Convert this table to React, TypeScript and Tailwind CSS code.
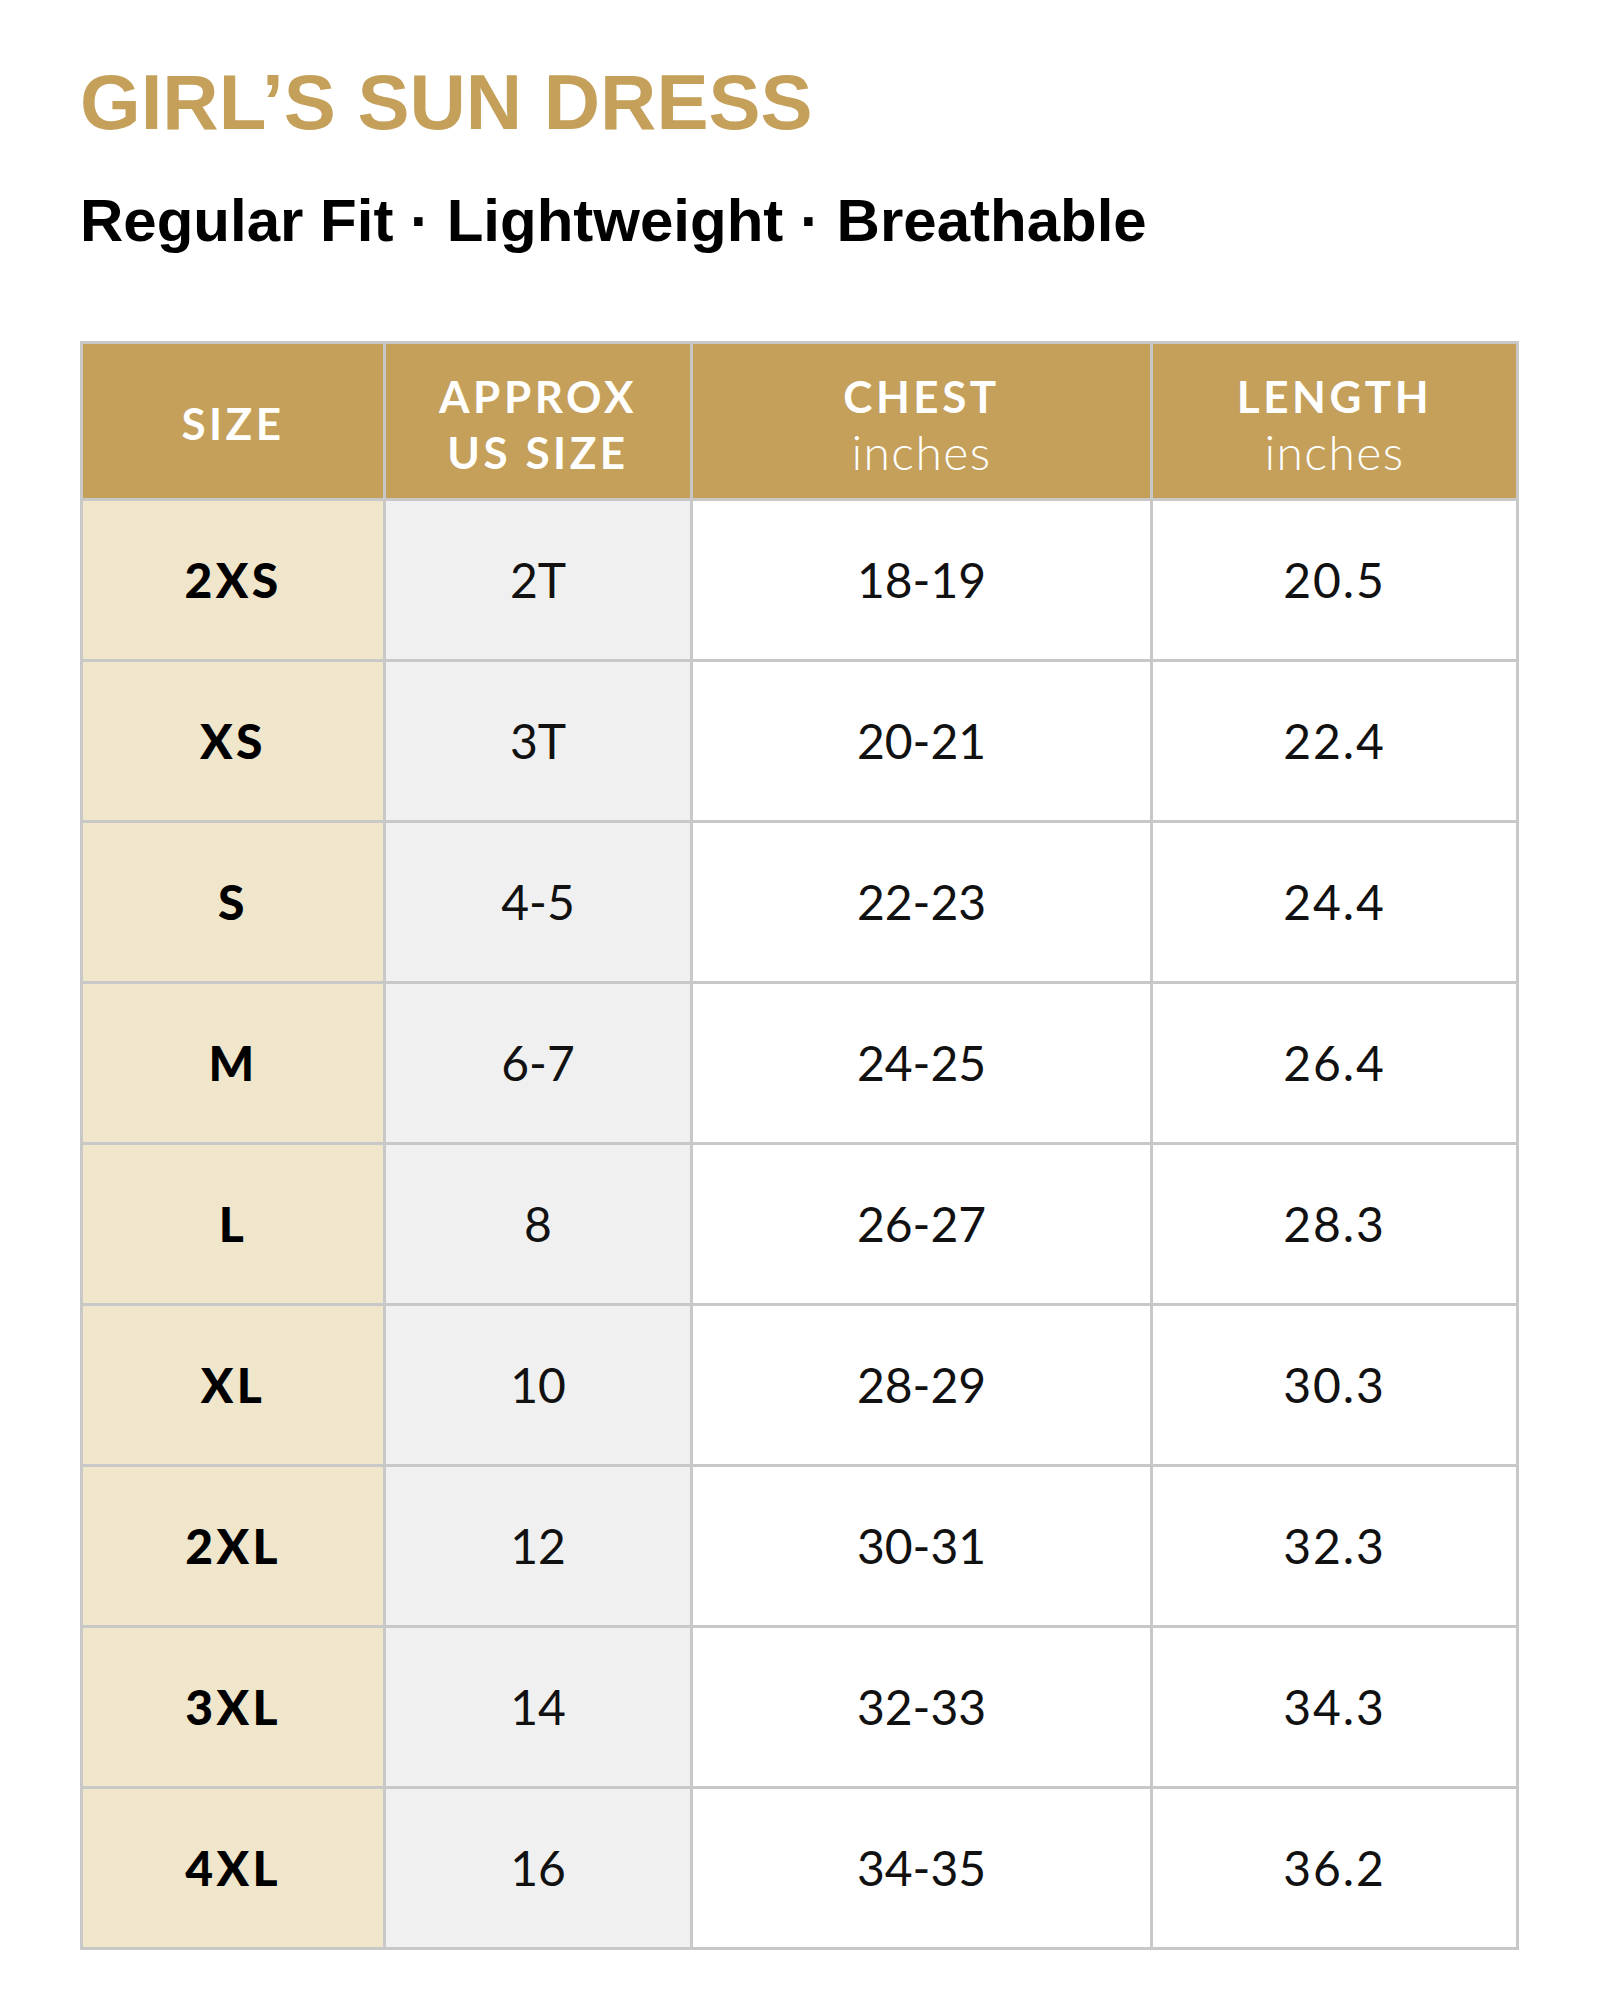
const ROWS: Array<[string, string, string, string]> = [
  ["2XS", "2T", "18-19", "20.5"],
  ["XS", "3T", "20-21", "22.4"],
  ["S", "4-5", "22-23", "24.4"],
  ["M", "6-7", "24-25", "26.4"],
  ["L", "8", "26-27", "28.3"],
  ["XL", "10", "28-29", "30.3"],
  ["2XL", "12", "30-31", "32.3"],
  ["3XL", "14", "32-33", "34.3"],
  ["4XL", "16", "34-35", "36.2"],
];

const cell = "flex items-center justify-center text-center";

export default function App() {
  return (
    <div className="min-h-[2000px] bg-white pl-[80px] pt-[63px]">
      <h1 className="font-['Liberation_Sans',Arial,sans-serif] text-[78px] font-bold leading-none text-[#c4a05b]">
        GIRL’S SUN DRESS
      </h1>
      <p className="mt-[50px] font-['Liberation_Sans',Arial,sans-serif] text-[60px] font-bold leading-none text-black">
        Regular Fit · Lightweight · Breathable
      </p>

      <div className="mt-[90px] grid w-[1439px] grid-cols-[300px_304px_457px_363px] grid-rows-[154px_repeat(9,158px)] gap-[3px] bg-[#c8c8c8] p-[3px] font-['Lato',sans-serif]">
        <div className={`${cell} bg-[#c4a05b] pt-[4px] text-[44px] font-bold tracking-[0.08em] text-white`}>SIZE</div>
        <div className={`${cell} bg-[#c4a05b] pt-[6px] text-[44px] font-bold leading-[56px] tracking-[0.08em] text-white`}>
          APPROX
          <br />
          US SIZE
        </div>
        <div className={`${cell} flex-col bg-[#c4a05b] pt-[6px] leading-[56px] text-white`}>
          <span className="text-[44px] font-bold tracking-[0.08em]">CHEST</span>
          <span className="text-[48px] font-light tracking-[0.03em]">inches</span>
        </div>
        <div className={`${cell} flex-col bg-[#c4a05b] pt-[6px] leading-[56px] text-white`}>
          <span className="text-[44px] font-bold tracking-[0.08em]">LENGTH</span>
          <span className="text-[48px] font-light tracking-[0.03em]">inches</span>
        </div>

        {ROWS.map(([size, us, chest, length]) => (
          <div key={size} className="contents">
            <div className={`${cell} bg-[#efe6cc] text-[48px] font-black tracking-[0.07em] text-black`}>{size}</div>
            <div className={`${cell} bg-[#f0f0f0] text-[48px] font-normal text-[#111]`}>{us}</div>
            <div className={`${cell} bg-white text-[48px] font-normal text-[#111]`}>{chest}</div>
            <div className={`${cell} bg-white text-[48px] font-normal tracking-[0.04em] text-[#111]`}>{length}</div>
          </div>
        ))}
      </div>
    </div>
  );
}
